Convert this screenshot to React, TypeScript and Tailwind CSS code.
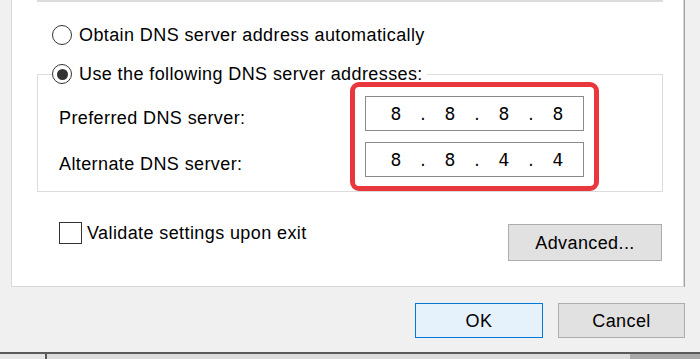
import React from "react";

function Radio({ checked }: { checked?: boolean }) {
  return (
    <span className="flex h-[20px] w-[20px] shrink-0 items-center justify-center rounded-full border-[1.5px] border-[#333333] bg-white">
      {checked ? <span className="h-[11px] w-[11px] rounded-full bg-[#333333]" /> : null}
    </span>
  );
}

function IpBox({ octets }: { octets: string[] }) {
  return (
    <div className="flex h-[35px] w-[219px] items-center border-[1.5px] border-[#8a8a8a] bg-white pl-[10px]">
      {octets.map((o, i) => (
        <React.Fragment key={i}>
          {i > 0 ? <span className="w-[14px] text-center">.</span> : null}
          <span className="w-[40px] text-center">{o}</span>
        </React.Fragment>
      ))}
    </div>
  );
}

export default function App() {
  return (
    <div className="flex h-[359px] w-[700px] flex-col overflow-hidden bg-[#f0f0f0] font-['Liberation_Sans',sans-serif] text-[18px] leading-[22px] tracking-[0.4px] text-black">
      <div className="flex h-[287px] shrink-0">
        <div className="w-[11px] shrink-0" />
        <div className="flex w-[673px] shrink-0 flex-col border-x border-b border-[#d9d9d9] bg-white">
          <div className="ml-[25px] h-[2px] w-[626px] bg-[#dcdcdc]" />

          <label className="ml-[40px] mt-[22px] flex items-center gap-[7px]">
            <Radio />
            <span>Obtain DNS server address automatically</span>
          </label>

          <fieldset className="ml-[25px] mt-[17px] w-[626px] border border-[#dcdcdc]">
            <legend className="ml-[14px] flex items-center gap-[7px] pr-[4px]">
              <Radio checked />
              <span>Use the following DNS server addresses:</span>
            </legend>
            <div className="flex items-start">
              <div className="flex w-[312px] flex-col gap-[11px] pl-[21px] pt-[15px]">
                <div className="flex h-[35px] items-center">Preferred DNS server:</div>
                <div className="flex h-[35px] items-center">Alternate DNS server:</div>
              </div>
              <div className="-mt-[3px] flex w-[249px] flex-col gap-[11px] rounded-[9px] border-[5px] border-[#e8383d] px-[10px] pb-[9px] pt-[9px] font-['DejaVu_Sans',sans-serif] text-[17px] tracking-normal">
                <IpBox octets={["8", "8", "8", "8"]} />
                <IpBox octets={["8", "8", "4", "4"]} />
              </div>
            </div>
          </fieldset>

          <div className="mt-[30px] flex items-start justify-between pl-[47px] pr-[21px]">
            <label className="flex items-center gap-[5px]">
              <span className="h-[22px] w-[23px] border-[1.5px] border-[#333333] bg-white" />
              <span>Validate settings upon exit</span>
            </label>
            <button className="mt-[2px] h-[37px] w-[154px] border border-[#adadad] bg-[#e1e1e1]">
              Advanced...
            </button>
          </div>
        </div>
        <div className="flex-1 border-l border-[#a0a0a0]" />
      </div>

      <div className="flex justify-end gap-[15px] pr-[15px] pt-[16px]">
        <button className="h-[35px] w-[128px] border-[1.5px] border-[#0078d7] bg-[#e5f1fb]">OK</button>
        <button className="h-[35px] w-[127px] border border-[#adadad] bg-[#e1e1e1]">Cancel</button>
      </div>

      <div className="mt-auto flex h-[7px] border-t-2 border-[#5a5a5a]">
        <div className="w-[47px] border-r-2 border-[#5a5a5a] bg-[#e6e6e6]" />
        <div className="w-[583px] bg-[#dcdcdc]" />
        <div className="flex-1 bg-[#a8a8a8]" />
      </div>
    </div>
  );
}
